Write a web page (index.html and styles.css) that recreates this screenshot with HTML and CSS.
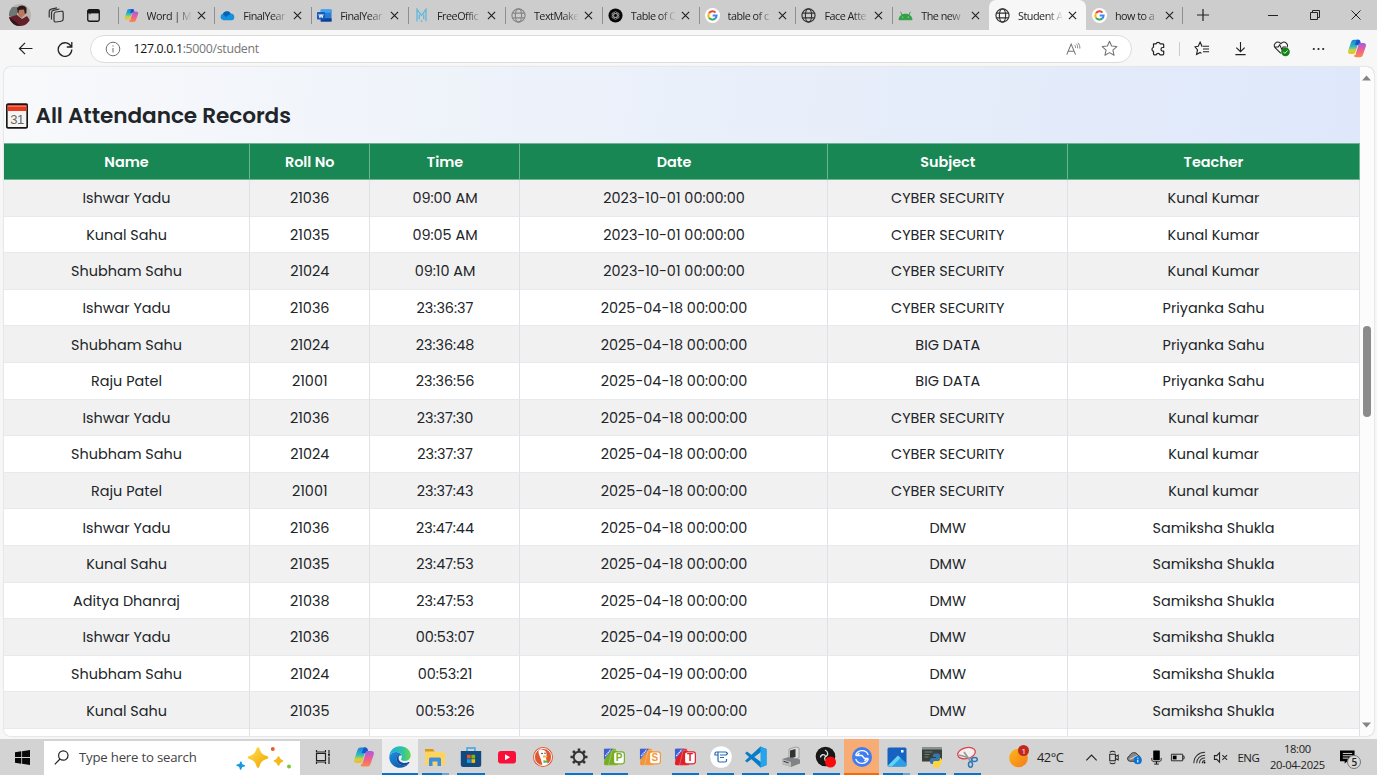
FILE: index.html
```html
<!DOCTYPE html>
<html lang="en">
<head>
<meta charset="utf-8">
<title>Student Attendance</title>
<link rel="stylesheet" href="styles.css">
</head>
<body>
<svg class="defs" width="0" height="0">
  <defs>
    <linearGradient id="cpA" x1="0" y1="0" x2="0" y2="1"><stop offset="0" stop-color="#1b7fe0"/><stop offset=".45" stop-color="#2bb7c4"/><stop offset=".75" stop-color="#c9d63c"/><stop offset="1" stop-color="#f5b62a"/></linearGradient>
    <linearGradient id="cpB" x1="0" y1="0" x2="0" y2="1"><stop offset="0" stop-color="#a75be8"/><stop offset=".5" stop-color="#ef5f8f"/><stop offset="1" stop-color="#fb8a45"/></linearGradient>
    <linearGradient id="edA" x1="0" y1="0" x2="1" y2="0"><stop offset="0" stop-color="#27a9e6"/><stop offset=".6" stop-color="#2cc3a5"/><stop offset="1" stop-color="#6bd84a"/></linearGradient>
    <linearGradient id="edB" x1="0" y1="0" x2="1" y2="1"><stop offset="0" stop-color="#1f8fe0"/><stop offset="1" stop-color="#0b4f9e"/></linearGradient>
    <linearGradient id="sun" x1="0" y1="0" x2="1" y2="1"><stop offset="0" stop-color="#fdb813"/><stop offset="1" stop-color="#f47a1f"/></linearGradient>
    <linearGradient id="star" x1="0" y1="0" x2="1" y2="1"><stop offset="0" stop-color="#ffdc55"/><stop offset="1" stop-color="#f3a700"/></linearGradient>
    <symbol id="globe" viewBox="0 0 16 16"><g fill="none" stroke="currentColor" stroke-width="1.25"><circle cx="8" cy="8" r="7"/><ellipse cx="8" cy="8" rx="3.3" ry="7"/><path d="M1.6 5.4h12.8M1.6 10.6h12.8"/></g></symbol>
    <symbol id="close" viewBox="0 0 10 10"><path d="M1 1l8 8M9 1l-8 8" fill="none" stroke="#1c1c1c" stroke-width="1.2"/></symbol>
    <symbol id="copilot" viewBox="0 0 22 20"><path d="M14.6 2.3C14.2 1 13.3.4 12 .4H8C5.7.4 4.9 1.6 4.3 3.6L1.4 12C.5 14.7 1.5 16 4 16h2.600c1.600 0 2.400-.8 2.900-2.300L12.400 4c.4-1.200 1-1.700 2.200-1.700z" fill="url(#cpA)"/><path d="M7.400 17.700c.4 1.300 1.300 1.900 2.600 1.900h4c2.300 0 3.100-1.200 3.700-3.200L20.600 8c.9-2.700-.1-4-2.600-4h-2.600c-1.600 0-2.400.8-2.900 2.300L9.600 16c-.4 1.200-1 1.700-2.200 1.700z" fill="url(#cpB)"/><path d="M12 .4c1.500 0 2.300.7 2.700 2.100l.5 1.600c-1.500.1-2.200.8-2.700 2.200L8.700 6 10.800.4z" fill="#1756c8"/></symbol>
    <symbol id="google" viewBox="0 0 16 16"><circle cx="8" cy="8" r="8" fill="#fff"/><g fill="none" stroke-width="2.100"><path d="M4.300 5.600A4.400 4.400 0 0 1 11.200 4.900" stroke="#ea4335"/><path d="M4.300 5.600A4.500 4.500 0 0 0 4.300 10.400" stroke="#fbbc05"/><path d="M4.300 10.400A4.400 4.400 0 0 0 10.900 11.300" stroke="#34a853"/><path d="M10.900 11.300A4.300 4.300 0 0 0 12.400 8.100H8.200" stroke="#4285f4"/></g></symbol>
    <symbol id="onedrive" viewBox="0 0 16 11"><path d="M3.600 10.500A3.500 3.500 0 0 1 3 3.700 4.800 4.800 0 0 1 11.500 3.500 3.600 3.600 0 0 1 12.800 10.500z" fill="#1490df"/><path d="M3 3.700A4.800 4.800 0 0 1 11.500 3.500L6 7z" fill="#0364b8"/></symbol>
    <symbol id="word" viewBox="0 0 16 14"><rect x="4" y=".5" width="11.500" height="13" rx="1" fill="#2b7cd3"/><path d="M4 .5h11.500v3.500H4z" fill="#41a5ee"/><path d="M4 10h11.500v3.500H4z" fill="#103f91"/><rect y="3.300" width="8.500" height="8" rx=".8" fill="#185abd"/><path d="M2 5.500l1.100 3.800 1.200-3.600 1.200 3.600 1.100-3.800" stroke="#fff" fill="none"/></symbol>
    <symbol id="emm" viewBox="0 0 12 16"><path d="M1.200 14V1.500L6 8l4.800-6.500V14M3.600 7v5M8.400 7v5M6 13v2" fill="none" stroke="#62b8dc" stroke-width="1.400"/></symbol>
    <symbol id="seal" viewBox="0 0 16 16"><circle cx="8" cy="8" r="7.500" fill="#080808"/><g fill="none" stroke="#aaa" stroke-width=".8"><ellipse cx="8" cy="8" rx="2" ry="4.300"/><ellipse cx="8" cy="8" rx="2" ry="4.300" transform="rotate(60 8 8)"/><ellipse cx="8" cy="8" rx="2" ry="4.300" transform="rotate(120 8 8)"/></g></symbol>
    <symbol id="android" viewBox="0 0 16 10"><path d="M1 9.500c.3-3.700 3-6 7-6s6.700 2.300 7 6zM4.500 4.500L2.700 1M11.500 4.500L13.300 1" fill="#34a046" stroke="#34a046"/><path d="M4.500 6.800h1M10.500 6.800h1" stroke="#d8edd8"/></symbol>
    <symbol id="free" viewBox="0 0 24 20"><path d="M3 1h11v18H3a2 2 0 0 1-2-2z" fill="currentColor"/><path d="M10 2.500h4.500l2 2.500V19H6z" fill="currentColor" stroke="#fff" stroke-opacity=".5" stroke-width=".6"/><path d="M1 1h10L1 13z" fill="#3f5fd5"/><path d="M2.500 9l6-7" stroke="#dce5ff" stroke-width="1.500" stroke-dasharray="1.500 .7"/><rect x="11.500" y="4.500" width="11.800" height="13" rx="2.500" fill="#fff" stroke="currentColor" stroke-width="1.300"/></symbol>
  </defs>
</svg>

<header class="tabstrip">
  <svg class="avatar" viewBox="0 0 22 22"><clipPath id="av"><circle cx="11" cy="11" r="11"/></clipPath><g clip-path="url(#av)"><path fill="#b9b3b0" d="M0 0h22v22H0z"/><path fill="#6e7773" d="M0 3h8v9H0z"/><path d="M8 4c2-3.500 8-3.500 9.500 0v5l-3 2-6-2z" fill="#2b1a1a"/><path d="M10 6l5-.5 1 5-3.500 3.500-3.500-3z" fill="#b9785d"/><path d="M0 13l8-2 5 4 5-3 4 6v4H0z" fill="#641f29"/><path d="M0 13l7 5 4 4H0z" fill="#30171d"/></g></svg>
  <svg class="workspaces" viewBox="0 0 16 16"><g fill="none" stroke="#333" stroke-width="1.200"><rect x="6" y="4.800" width="9.200" height="10" rx="2" transform="skewY(-8) translate(0 1.300)"/><path d="M3.500 12.500V5.500c0-1.200.7-1.900 1.800-2.200L11.500 2M1.200 10.500V4.500C1.200 3.200 2 2.400 3.200 2.100L9 .8"/></g></svg>
  <svg class="tabactions" viewBox="0 0 14 14"><rect x=".8" y=".8" width="12.400" height="12.400" rx="1.800" fill="none" stroke="#171717" stroke-width="1.400"/><path d="M1 1.200h12v3H1zM3.200 4v1.800" fill="#171717" stroke="#171717"/></svg>
  <nav class="tabs">
    <div class="tab"><svg><use href="#copilot"/></svg><span>Word | M</span><i><svg><use href="#close"/></svg></i></div>
    <div class="tab"><svg><use href="#onedrive"/></svg><span>FinalYear</span><i><svg><use href="#close"/></svg></i></div>
    <div class="tab"><svg><use href="#word"/></svg><span>FinalYear</span><i><svg><use href="#close"/></svg></i></div>
    <div class="tab"><svg><use href="#emm"/></svg><span>FreeOffic</span><i><svg><use href="#close"/></svg></i></div>
    <div class="tab"><svg class="dim"><use href="#globe"/></svg><span>TextMake</span><i><svg><use href="#close"/></svg></i></div>
    <div class="tab"><svg><use href="#seal"/></svg><span>Table of C</span><i><svg><use href="#close"/></svg></i></div>
    <div class="tab"><svg><use href="#google"/></svg><span>table of c</span><i><svg><use href="#close"/></svg></i></div>
    <div class="tab"><svg><use href="#globe"/></svg><span>Face Atte</span><i><svg><use href="#close"/></svg></i></div>
    <div class="tab"><svg><use href="#android"/></svg><span>The new</span><i><svg><use href="#close"/></svg></i></div>
    <div class="tab active"><svg><use href="#globe"/></svg><span>Student A</span><i><svg><use href="#close"/></svg></i></div>
    <div class="tab"><svg><use href="#google"/></svg><span>how to a</span><i><svg><use href="#close"/></svg></i></div>
  </nav>
  <svg class="plus" viewBox="0 0 12 12"><path d="M6 0v12M0 6h12" stroke="#222" stroke-width="1.200"/></svg>
  <div class="wincontrols">
    <svg viewBox="0 0 10 10"><path d="M0 5.500h10" stroke="#222"/></svg>
    <svg viewBox="0 0 10 10"><path d="M.5 2.500h7v7h-7zM2.500 2.500v-2h7v7h-2" fill="none" stroke="#222"/></svg>
    <svg viewBox="0 0 10 10"><path d="M.5.5l9 9M9.500.5l-9 9" stroke="#222"/></svg>
  </div>
</header>

<div class="toolbar">
  <svg class="back" viewBox="0 0 16 14"><path d="M15.500 7H1.500M7.500 1L1.500 7l6 6" fill="none" stroke="#222" stroke-width="1.300"/></svg>
  <svg class="reload" viewBox="0 0 16 16"><path d="M14.300 6A6.800 6.800 0 1 0 14.800 8.500M14.800 1v5H9.800" fill="none" stroke="#222" stroke-width="1.300"/></svg>
  <div class="address">
    <svg class="info" viewBox="0 0 16 16"><circle cx="8" cy="8" r="6.800" fill="none" stroke="#6d6d6d"/><path d="M8 7v4.500M8 4.300v1.200" stroke="#6d6d6d"/></svg>
    <p class="url"><b>127.0.0.1</b>:5000/student</p>
    <svg class="read" viewBox="0 0 16 14"><path d="M.8 13L5.500 1.800 10.200 13M2.300 9.300h6.300" fill="none" stroke="#737373" stroke-width="1.100"/><path d="M9 2.600c1 .9 1.300 1.900 1.200 3.200M10.800 1.300c1.400 1.300 1.800 2.900 1.600 4.900M12.700.3c1.700 1.700 2.300 3.900 2 6.300" fill="none" stroke="#737373" stroke-width=".9"/></svg>
    <svg class="fav" viewBox="0 0 16 16"><path d="M8 1.200l2 4.500 4.900.5-3.700 3.300 1.100 4.900L8 11.900l-4.300 2.500 1.100-4.900L1.100 6.200 6 5.700z" fill="none" stroke="#737373" stroke-linejoin="round"/></svg>
  </div>
  <svg class="ext" viewBox="0 0 16 16"><path d="M3.500 2.800h2.600a2.100 2.100 0 0 1 4 0h2.600a1 1 0 0 1 1 1v2.700h-.9a1.800 1.800 0 0 0 0 3.600h.9v2.700a1 1 0 0 1-1 1H10a2 2 0 0 0-3.800 0H4.500a1 1 0 0 1-1-1v-2.400a2.200 2.200 0 0 1 0-4.200z" fill="none" stroke="#222" stroke-width="1.200" stroke-linejoin="round"/></svg>
  <i class="divider"></i>
  <svg class="favlist" viewBox="0 0 16 16"><path d="M8.500 5.700H8L6 1.200l-2 4.500-3.500.5 2.700 3.300-1 4.900L6 12.200l1.500 1" fill="none" stroke="#222" stroke-width="1.200"/><path d="M9 5.500h6.500M9 8.500h6.500M9 11.500h6.500" stroke="#222" stroke-width="1.100"/></svg>
  <svg class="download" viewBox="0 0 14 16"><path d="M7 1v10M2.500 7L7 11.500 11.500 7M1.500 14.600h11" fill="none" stroke="#222" stroke-width="1.200"/></svg>
  <svg class="heart" viewBox="0 0 18 17"><path d="M8.300 13.700L2.200 7.700A3.700 3.700 0 0 1 7.500 2.600l.9.8.9-.8a3.700 3.700 0 0 1 5.400 4.900M1.500 7h4l1.600-2.500 2.200 5L10.700 7h3" fill="none" stroke="#222" stroke-width="1.100"/><circle cx="13.200" cy="12" r="4.600" fill="#128318"/><path d="M11 12l1.600 1.600 2.900-3" fill="none" stroke="#fff"/></svg>
  <svg class="dots" viewBox="0 0 12 4" fill="#222"><circle cx="1.300" cy="2" r="1.100"/><circle cx="6" cy="2" r="1.100"/><circle cx="10.700" cy="2" r="1.100"/></svg>
  <svg class="cpl"><use href="#copilot"/></svg>
</div>

<main class="viewport">
  <section class="page">
    <h2><svg viewBox="0 0 22 26"><rect x=".8" y="1.200" width="20.400" height="23.600" rx="1.200" fill="#f5f4f3" stroke="#171717" stroke-width="1.700"/><path d="M1.600 2h18.800v6H1.600z" fill="#e8391c"/><path d="M2.500 3.200h17" stroke="#ffd6cc" stroke-dasharray="1 1"/><text x="11" y="21" text-anchor="middle">31</text></svg><span>All Attendance Records</span></h2>
    <div class="records">
      <div class="row head"><b>Name</b><b>Roll No</b><b>Time</b><b>Date</b><b>Subject</b><b>Teacher</b></div>
      <div class="row"><span>Ishwar Yadu</span><span>21036</span><span>09:00 AM</span><span>2023-10-01 00:00:00</span><span>CYBER SECURITY</span><span>Kunal Kumar</span></div>
      <div class="row"><span>Kunal Sahu</span><span>21035</span><span>09:05 AM</span><span>2023-10-01 00:00:00</span><span>CYBER SECURITY</span><span>Kunal Kumar</span></div>
      <div class="row"><span>Shubham Sahu</span><span>21024</span><span>09:10 AM</span><span>2023-10-01 00:00:00</span><span>CYBER SECURITY</span><span>Kunal Kumar</span></div>
      <div class="row"><span>Ishwar Yadu</span><span>21036</span><span>23:36:37</span><span>2025-04-18 00:00:00</span><span>CYBER SECURITY</span><span>Priyanka Sahu</span></div>
      <div class="row"><span>Shubham Sahu</span><span>21024</span><span>23:36:48</span><span>2025-04-18 00:00:00</span><span>BIG DATA</span><span>Priyanka Sahu</span></div>
      <div class="row"><span>Raju Patel</span><span>21001</span><span>23:36:56</span><span>2025-04-18 00:00:00</span><span>BIG DATA</span><span>Priyanka Sahu</span></div>
      <div class="row"><span>Ishwar Yadu</span><span>21036</span><span>23:37:30</span><span>2025-04-18 00:00:00</span><span>CYBER SECURITY</span><span>Kunal kumar</span></div>
      <div class="row"><span>Shubham Sahu</span><span>21024</span><span>23:37:37</span><span>2025-04-18 00:00:00</span><span>CYBER SECURITY</span><span>Kunal kumar</span></div>
      <div class="row"><span>Raju Patel</span><span>21001</span><span>23:37:43</span><span>2025-04-18 00:00:00</span><span>CYBER SECURITY</span><span>Kunal kumar</span></div>
      <div class="row"><span>Ishwar Yadu</span><span>21036</span><span>23:47:44</span><span>2025-04-18 00:00:00</span><span>DMW</span><span>Samiksha Shukla</span></div>
      <div class="row"><span>Kunal Sahu</span><span>21035</span><span>23:47:53</span><span>2025-04-18 00:00:00</span><span>DMW</span><span>Samiksha Shukla</span></div>
      <div class="row"><span>Aditya Dhanraj</span><span>21038</span><span>23:47:53</span><span>2025-04-18 00:00:00</span><span>DMW</span><span>Samiksha Shukla</span></div>
      <div class="row"><span>Ishwar Yadu</span><span>21036</span><span>00:53:07</span><span>2025-04-19 00:00:00</span><span>DMW</span><span>Samiksha Shukla</span></div>
      <div class="row"><span>Shubham Sahu</span><span>21024</span><span>00:53:21</span><span>2025-04-19 00:00:00</span><span>DMW</span><span>Samiksha Shukla</span></div>
      <div class="row"><span>Kunal Sahu</span><span>21035</span><span>00:53:26</span><span>2025-04-19 00:00:00</span><span>DMW</span><span>Samiksha Shukla</span></div>
      <div class="row"><span></span><span></span><span></span><span></span><span></span><span></span></div>
    </div>
  </section>
  <aside class="scrollbar">
    <svg viewBox="0 0 9 6"><path d="M4.500.5L9 5.500H0z" fill="#858585"/></svg>
    <div class="thumb"></div>
    <svg viewBox="0 0 9 6"><path d="M4.500 5.500L9 .5H0z" fill="#858585"/></svg>
  </aside>
</main>

<footer class="taskbar">
  <div class="start"><svg viewBox="0 0 15 15"><path d="M0 2.200l6.300-.9v5.800H0zM7.100 1.200L15 0v7.100H7.100zM0 7.900h6.300v5.800L0 12.800zM7.100 7.900H15V15l-7.900-1.200z" fill="#080808"/></svg></div>
  <div class="search">
    <svg class="lens" viewBox="0 0 15 15"><circle cx="9.300" cy="5.500" r="4.700" fill="none" stroke="#222" stroke-width="1.200"/><path d="M6 9L.8 14.300" stroke="#222" stroke-width="1.200"/></svg>
    <span>Type here to search</span>
    <svg class="sparkle" viewBox="0 0 56 24"><path d="M22 2.500c1.800 5.500 3.300 7.200 9 9-5.700 1.800-7.200 3.500-9 9-1.800-5.500-3.300-7.200-9-9 5.700-1.800 7.200-3.500 9-9z" fill="url(#star)" stroke="url(#star)" stroke-width="2.500" stroke-linejoin="round"/><path d="M42.500 11c.8 2.600 1.500 3.300 4 4-2.500.7-3.200 1.400-4 4-.8-2.600-1.500-3.300-4-4 2.500-.7 3.200-1.400 4-4z" fill="#f8b718" stroke="#f8b718" stroke-width="1.600" stroke-linejoin="round"/><path d="M4.900 16l.8 2.700 2.700 1.100-2.700.8-1.100 2.600-.9-2.800L1 19.200l2.800-.7z" fill="#159be0" stroke="#159be0" stroke-width="1.300" stroke-linejoin="round"/><circle cx="36.800" cy="3" r="2" fill="#ed5a2b"/><circle cx="53" cy="20.500" r="2" fill="#7ec736"/></svg>
  </div>
  <div class="taskview"><svg viewBox="0 0 16 14"><path d="M1.500 3.500h9v7h-9zM1.500 0v2h9V0M1.500 14v-2h9v2M14 0v3M14 6.500V14" fill="none" stroke="#202020" stroke-width="1.200"/><path d="M13 3.500h2v2.300h-2z" fill="#202020"/></svg></div>
  <div class="apps">
    <div class="app"><svg><use href="#copilot"/></svg></div>
    <div class="app run focus"><svg viewBox="0 0 22 22"><path d="M.3 11C.3 4.800 5 .2 11 .2c6.300 0 10.700 4.300 10.700 9 0 3.500-2.600 5.700-5.700 5.700-2.500 0-4-.9-4-1.700 0-.7.9-1 .9-2.800C12.900 7.700 10 6 7 6 3.500 6 1 8 .3 11z" fill="url(#edA)"/><path d="M.3 11C1 8 3.500 6 7 6c2.700 0 5.200 1.500 5.800 3.700C9.500 8.600 7.600 10.700 7.600 13c0 4 3.600 6.300 7 6.300 2 0 3.400-.5 4.500-1-1.900 2.300-4.800 3.500-8 3.500C5 21.800.3 17 .3 11z" fill="url(#edB)"/><path d="M7.600 13c0-2 1.400-3.500 3-3.900-2.400 3-.7 7.300 4 7.900 1.800.2 3.700-.3 5.100-.9.600-.2.900.2.600.7l-1.200 1.500c-1.100.5-2.500 1-4.500 1-3.400 0-7-2.300-7-6.300z" fill="#0c4da2"/></svg></div>
    <div class="app run stacked"><svg viewBox="0 0 22 20"><path d="M1 2h8l2 3h10v13H1z" fill="#ffd45e"/><path d="M1 2h8l1.500 2.500H1z" fill="#d99a10"/><path d="M5 19v-7a1.500 1.500 0 0 1 1.500-1.500h9A1.500 1.500 0 0 1 17 12v7h-3.500v-4.500h-5V19z" fill="#3b8fdc"/></svg></div>
    <div class="app run"><svg viewBox="0 0 22 22"><path d="M7 6V2h8v4" fill="none" stroke="#37a6e8" stroke-width="1.400"/><path d="M.8 5h20.400v13.500A2.500 2.500 0 0 1 18.700 21H3.300A2.500 2.500 0 0 1 .8 18.500z" fill="#124a80"/><path d="M7 8.800h3.700v3.700H7z" fill="#f25022"/><path d="M11.400 8.800h3.700v3.700h-3.700z" fill="#7fba00"/><path d="M7 13.200h3.700v3.700H7z" fill="#00a4ef"/><path d="M11.400 13.200h3.700v3.700h-3.700z" fill="#ffb900"/></svg></div>
    <div class="app"><svg viewBox="0 0 22 22"><rect x="2" y="5" width="18" height="12.500" rx="3" fill="#fa0f38"/><path d="M9 8.300v6l5-3z" fill="#fff"/></svg></div>
    <div class="app"><svg viewBox="0 0 22 22"><circle cx="11" cy="11" r="10" fill="#de5833"/><circle cx="11" cy="11" r="8.600" fill="none" stroke="#fff" stroke-width=".9"/><path d="M6.500 6.500C6 3.500 9 3 10.500 3.800c3 .4 4.300 2.500 4 5.200 0 2-.7 3.500 0 5l1.300 4c-1.500 1-3.500 1.400-5.300 1.300L8.800 13c-1-2.500-1.500-4-2.300-6.500z" fill="#fff"/><path d="M11 9.800c1.500-.5 3.500-.2 5 .2-1 1.200-3 1.500-5 1.500z" fill="#fdb515"/><path d="M11.500 14l2 .8 2.300-.8v3l-2-.6-2.300.6z" fill="#62b246"/><circle cx="10" cy="7.500" r=".8" fill="#234"/><circle cx="13" cy="7.200" r=".7" fill="#234"/></svg></div>
    <div class="app run"><svg viewBox="0 0 22 22"><g stroke="#333" fill="none"><circle cx="11" cy="11" r="5.300" stroke-width="2"/><path d="M11 2.500v3M11 16.500v3M2.500 11h3M16.500 11h3M5 5l2 2M15 15l2 2M17 5l-2 2M7 15l-2 2" stroke-width="2.600"/></g></svg></div>
    <div class="app run green"><svg><use href="#free"/></svg><em>P</em></div>
    <div class="app orange"><svg><use href="#free"/></svg><em>S</em></div>
    <div class="app run red"><svg><use href="#free"/></svg><em>T</em></div>
    <div class="app run"><svg viewBox="0 0 22 22"><circle cx="11" cy="11" r="10.800" fill="#fff"/><path d="M16 6H6.500A1.500 1.500 0 0 0 5 7.500V9h3M8 6.500v8A1.500 1.500 0 0 0 9.500 16H15a1.500 1.500 0 0 0 1.500-1.500V13M10 9h6M10 11.500h4M16 6l1.500 1.500L16 9" fill="none" stroke="#276ab4" stroke-width="1.200"/></svg></div>
    <div class="app run"><svg viewBox="0 0 22 22"><path d="M15.500.5l6 2.500v16l-6 2.500L0 7.200l2-1.700 14 10.600V6L2 16.500l-2-1.700z" fill="#087dc7"/><path d="M15.500.5l6 2.500v16l-6 2.500z" fill="#27a5ec"/></svg></div>
    <div class="app run"><svg viewBox="0 0 22 22"><path d="M9 3l7-2 3 1v10l-8 2-2-1z" fill="#ddd" stroke="#777" stroke-width=".6"/><path d="M10 4.500L15.500 3v8L10 12.500z" fill="#333"/><path d="M2 13l7-2 11 2.500v4L11 21l-9-3z" fill="#818386"/><path d="M2 13l9 3v5l-9-3z" fill="#babcbd"/><path d="M3.500 15.200l5 1.700" stroke="#333"/></svg></div>
    <div class="app run"><svg viewBox="0 0 22 22"><circle cx="10.500" cy="10.500" r="9.800" fill="#171717"/><path d="M10.500 10.500c-1-3-5-2-5 1M10.500 10.500c3-1 3-5-.5-6.500M10.500 10.500c-2 2 0 6 3 5" fill="none" stroke="#ddd" stroke-width="1.300"/><circle cx="15.500" cy="16" r="5.500" fill="#f80b0b"/></svg></div>
    <div class="app run alert"><svg viewBox="0 0 22 22"><circle cx="11" cy="11" r="10" fill="#3f7df0"/><path d="M4.600 9.500A6.700 6.700 0 0 1 17.300 9M17.400 12.500A6.700 6.700 0 0 1 4.700 13M8.500 7L6 9.500h5l2.500 3h3.800M13.500 15l2.500-2.500M4.700 9.500H6" fill="none" stroke="#fff" stroke-width="1.300"/></svg></div>
    <div class="app run stacked"><svg viewBox="0 0 22 22"><rect x="1.500" y="1.500" width="19" height="19" rx="1.500" fill="#1662c1"/><path d="M2 19.500L12 9.500l8.500 8v1a2 2 0 0 1-2 2h-15z" fill="#2e9fe4"/><path d="M2 19.500L12 9.500l2.500 2.500L6 20.500H3.500z" fill="#63d2f5"/><rect x="15" y="4" width="2.500" height="2.500" fill="#fff"/></svg></div>
    <div class="app run"><svg viewBox="0 0 22 22"><path d="M1 1.500h20v14H1z" fill="#39403b"/><path d="M1 1.500h20v2H1z" fill="#8c9490"/><path d="M3.500 6h8M3.500 8.500h5M3.500 11h4" stroke="#6f806f"/><path d="M13 7.500h4a2 2 0 0 1 2 2V13a2 2 0 0 1-2 2h-3a2 2 0 0 0-2 2v1h-1a2 2 0 0 1-2-2v-2a2 2 0 0 1 2-2h4v-1h-3v-2z" fill="#3776ab"/><path d="M20 12h-1v1a2 2 0 0 1-2 2h-3a2 2 0 0 0-2 2v2.500a2 2 0 0 0 2 2h3a2 2 0 0 0 2-2V18a2 2 0 0 0 2-2v-2z" fill="#ffd43b"/></svg></div>
    <div class="app run"><svg viewBox="0 0 22 22"><ellipse cx="10.500" cy="7" rx="9" ry="5.500" fill="#f5eeee" stroke="#df3f46" stroke-width="1.300" transform="rotate(-14 11 7)"/><path d="M3 9l14 4M8 6l7 10" stroke="#999" stroke-width="1.800"/><g fill="none" stroke="#2b77bd" stroke-width="1.500"><ellipse cx="18.500" cy="13.500" rx="2.800" ry="2"/><ellipse cx="14.500" cy="18.500" rx="2" ry="2.700"/></g></svg></div>
  </div>
  <div class="weather"><svg viewBox="0 0 22 22"><circle cx="9.500" cy="12" r="9.300" fill="url(#sun)"/></svg><em>1</em><span>42°C</span></div>
  <div class="tray">
    <i><svg viewBox="0 0 16 16"><path d="M2.500 11L8 5.500l5.500 5.500" fill="none" stroke="#222" stroke-width="1.200"/></svg></i>
    <i><svg viewBox="0 0 16 16"><path d="M4 4.500h6v7H4zM10 7l3-1.500v5L10 9M4 2.500c2-1.500 4-1.500 6 0M4 13.500c2 1.500 4 1.500 6 0" fill="none" stroke="#222" stroke-width="1.100"/></svg></i>
    <i><svg viewBox="0 0 16 16"><path d="M3 12a2.800 2.800 0 0 1-.3-5.500C4 2 10 1.500 11.500 5.500A3 3 0 0 1 14 8v4z" fill="#8b8b8b" stroke="#333"/><path d="M3 10l8-4" stroke="#ddd"/><circle cx="11.500" cy="11" r="4.300" fill="#0b72d3"/><path d="M11.500 10.300v3M11.500 8.300v1" stroke="#fff" stroke-width="1.200"/></svg></i>
    <i><svg viewBox="0 0 16 16"><rect x="4.500" y=".5" width="7" height="10.500" rx=".6"/><path d="M3 8.500v1.500C3 11.800 4.200 12.500 6 12.500h4c1.800 0 3-.7 3-2.500V8.500M8 12v3M5.500 15h5" fill="none" stroke="#111"/></svg></i>
    <i><svg viewBox="0 0 16 16"><path d="M1.500 4.500h12v7h-12zM13.500 6.500h1.500v3h-1.500" fill="none" stroke="#222"/><path d="M3 6h4v4H3z"/></svg></i>
    <i><svg viewBox="0 0 16 16"><g fill="none" stroke="#333" stroke-width="1.100"><path d="M2 14C2 7 7 2.500 14 2.500M5 14c0-5 4-8.500 9-8.500M8 14c0-3.500 2.500-5.500 6-5.500M11 14c0-1.700 1-2.700 3-2.700"/></g><circle cx="13.300" cy="13.300" r="1"/></svg></i>
    <i><svg viewBox="0 0 16 16"><path d="M1.500 6h2.500l3-3v10l-3-3H1.500zM10 5.500l5 5M15 5.500l-5 5" fill="none" stroke="#222" stroke-width="1.100"/></svg></i>
  </div>
  <span class="lang">ENG</span>
  <div class="clock"><span>18:00</span><span>20-04-2025</span></div>
  <div class="notice"><svg viewBox="0 0 16 14"><path d="M0 0h15.500v11.500H8L5 14v-2.500H0z"/><path d="M3 3.200h10M3 5.700h10M3 8.200h6" stroke="#ddd"/></svg><em>5</em></div>
</footer>
</body>
</html>
```

FILE: styles.css
```css
* { box-sizing: border-box; }
body { margin: 0; width: 1377px; height: 775px; overflow: hidden; background: #f7f7f7; display: flex; flex-direction: column; font-family: "Segoe UI", "Open Sans", "Noto Sans", sans-serif; color: #222; }
svg { display: block; flex: none; }
i, em { font-style: normal; }
.defs { position: absolute; }

/* Tab strip */
.tabstrip { height: 30px; flex: none; background: #cdcdcd; display: flex; align-items: center; }
.avatar { width: 22px; height: 22px; margin-left: 9px; }
.workspaces { width: 16px; height: 16px; margin-left: 17px; }
.tabactions { width: 13px; height: 13px; margin-left: 23px; }
.tabs { display: flex; margin-left: 17.500px; height: 30px; }
.tab { width: 96.850px; flex: none; display: flex; align-items: center; padding-left: 6px; font-size: 10.800px; letter-spacing: -.5px; position: relative; }
.tab::before { content: ""; position: absolute; left: 0; top: 7px; width: 1px; height: 17px; background: #8f8f8f; }
.tab:last-child::after { content: ""; position: absolute; right: 0; top: 7px; width: 1px; height: 17px; background: #8f8f8f; }
.tab > svg { width: 15px; height: 15px; color: #333; }
.tab > svg.dim { color: #858585; }
.tab span { width: 46px; margin-left: 8px; white-space: nowrap; -webkit-mask-image: linear-gradient(90deg, #000 62%, transparent 98%); mask-image: linear-gradient(90deg, #000 62%, transparent 98%); }
.tab i { margin-left: 4px; }
.tab i svg { width: 9px; height: 9px; }
.tab.active { background: #f7f7f7; border-radius: 7px 7px 0 0; }
.tab.active::before, .tab.active + .tab::before { display: none; }
.plus { width: 12px; height: 12px; margin-left: 14px; }
.wincontrols { margin-left: auto; display: flex; gap: 31.500px; padding-right: 16px; }
.wincontrols svg { width: 10px; height: 10px; }

/* Toolbar */
.toolbar { height: 37px; flex: none; display: flex; align-items: center; background: #f7f7f7; }
.back { width: 15px; height: 13px; margin-left: 17.500px; }
.reload { width: 16px; height: 16px; margin-left: 24px; }
.address { width: 1042px; height: 28px; margin-left: 17px; border: 1px solid #dcdcdc; border-radius: 14px; background: #fff; display: flex; align-items: center; }
.info { width: 16px; height: 16px; margin-left: 14px; }
.url { margin: 0 auto 0 13px; font-size: 12.300px; color: #757575; letter-spacing: -.3px; }
.url b { font-weight: 400; color: #111; }
.read { width: 15px; height: 14px; }
.fav { width: 17px; height: 17px; margin: 0 12.500px 0 20px; }
.ext { width: 16px; height: 16px; margin-left: 18px; }
.divider { width: 1px; height: 14px; background: #ccc; margin-left: 13px; }
.favlist { width: 16px; height: 15px; margin-left: 14px; }
.download { width: 13px; height: 15px; margin-left: 24.500px; }
.heart { width: 17px; height: 17px; margin-left: 25.500px; }
.dots { width: 13px; height: 4px; margin-left: 22.500px; }
.cpl { width: 20px; height: 19px; margin-left: 22px; }

/* Page */
.viewport { margin: 0 3.500px; height: 669px; flex: none; display: flex; border-radius: 7px; overflow: hidden; background: #fcfcfc; box-shadow: 0 0 1.500px #aaa; }
.page { width: 1356px; overflow: hidden; background: linear-gradient(97deg, #f8f9fb 0%, #eff3fa 30%, #e4ecfa 70%, #dee7fb 100%); font-family: "Poppins", Inter, sans-serif; color: #212529; }
h2 { margin: 0; height: 76px; padding: 21px 0 0 2px; display: flex; align-items: center; font-size: 21.600px; font-weight: 600; line-height: 1; }
h2 svg { width: 22px; height: 26px; }
h2 text { font: 400 13px "Liberation Sans", sans-serif; fill: #666; letter-spacing: -.6px; }
h2 span { margin-left: 8px; letter-spacing: -.05px; }
.row { display: grid; grid-template-columns: 246px 120.500px 150px 308px 239.500px 292px; height: 36.600px; background: #fff; font-size: 14.400px; }
.row:nth-child(even) { background: #f1f1f1; }
.row > * { display: flex; align-items: center; justify-content: center; padding: 2px 0 0 1px; border-right: 1px solid #dee2e6; border-bottom: 1px solid #e7eaec; }
.row.head { height: 37px; background: #198754; color: #fff; }
.row.head > * { font-weight: 600; padding-top: 1px; border-color: #70b394; border-top: 1px solid #70b394; }
.scrollbar { flex: 1; display: flex; flex-direction: column; align-items: center; padding: 8px 0; }
.scrollbar svg { width: 9px; height: 6px; }
.thumb { width: 8px; height: 91px; border-radius: 4px; background: #8b8b8b; margin: 245px 0 auto; }

/* Taskbar */
.taskbar { margin-top: 3px; height: 36px; flex: none; background: #d3d3d3; display: flex; align-items: center; position: relative; }
.start { width: 44px; display: flex; justify-content: center; }
.start svg { width: 15px; height: 15px; }
.search { width: 256px; height: 34px; background: #fff; display: flex; align-items: center; padding-left: 10px; margin-top: 1px; font-size: 13.200px; color: #444; }
.lens { width: 15px; height: 15px; margin-right: 10px; }
.search span { letter-spacing: -.2px; flex: 1; white-space: nowrap; padding-bottom: 1px; }
.sparkle { width: 56px; height: 24px; margin-right: 8px; }
.taskview { width: 46px; display: flex; justify-content: center; }
.taskview svg { width: 16px; height: 14px; }
.apps { display: flex; height: 36px; }
.app { width: 35.250px; height: 36px; display: flex; align-items: center; justify-content: center; position: relative; }
.app:nth-child(-n+8) { width: 35.800px; }
.app svg { width: 22px; height: 22px; }
.app.run::after { content: ""; position: absolute; left: 4px; right: 4px; bottom: 0; height: 2px; background: #0874ce; }
.app.stacked::after { background: linear-gradient(90deg, #0874ce 75%, #68a7dd 75%); }
.app.focus { background: #eee; }
.app.focus::after, .app.alert::after { left: 0; right: 0; }
.app.alert { background: #f7ab75; }
.app.alert::after { background: #f46b09; }
.app.green { color: #77ad26; }
.app.orange { color: #f2963c; }
.app.red { color: #df202b; }
.app em { position: absolute; left: 17.500px; top: 12px; width: 10px; text-align: center; font: 700 10px/13px "Liberation Sans", sans-serif; }
.weather { position: relative; display: flex; align-items: center; margin-left: 24.500px; font-size: 12.800px; width: 71.500px; }
.weather svg { width: 22px; height: 22px; }
.weather em { position: absolute; left: 9px; top: -1px; width: 11px; height: 11px; border-radius: 50%; background: #c3281c; color: #fff; text-align: center; font-size: 8px; line-height: 11px; }
.weather span { margin-left: 5.500px; letter-spacing: -.4px; }
.tray { display: flex; }
.tray i { width: 21.500px; display: flex; justify-content: center; }
.tray svg { width: 15px; height: 15px; }
.lang { width: 34px; text-align: center; font-size: 11.500px; letter-spacing: -.6px; }
.clock { width: 64px; display: flex; flex-direction: column; align-items: center; font-size: 11.200px; line-height: 16px; letter-spacing: -.35px; }
.notice { position: relative; margin-left: 11px; }
.notice svg { width: 15px; height: 14px; }
.notice em { position: absolute; left: 7px; top: 5px; width: 14px; height: 14px; border: 1px solid #777; border-radius: 50%; background: #d8d8d8; text-align: center; font: 600 10px/12px "Open Sans", sans-serif; }
```
